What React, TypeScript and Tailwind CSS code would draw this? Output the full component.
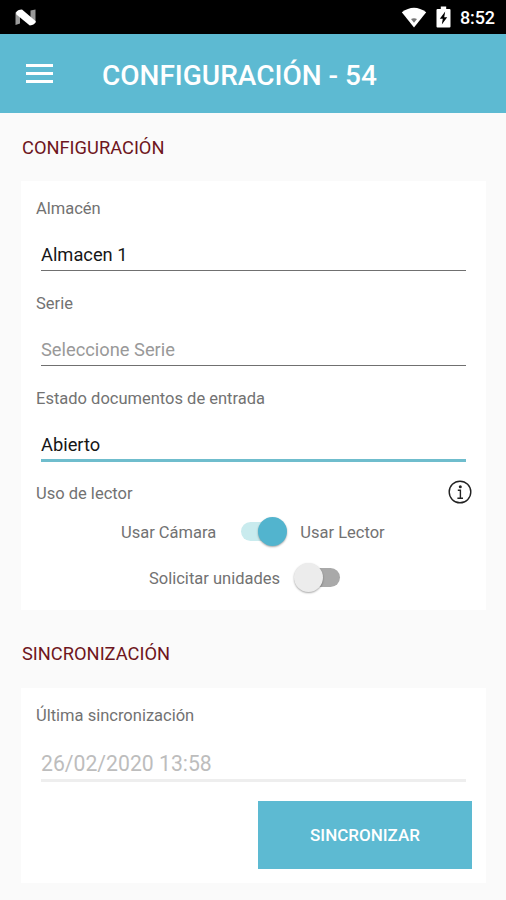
import { useState } from "react";
import clsx from "clsx";

function StatusBar() {
  return (
    <div className="h-[34px] bg-black text-white flex items-center justify-between pl-[15px] pr-[11px]">
      <svg width="21" height="17" viewBox="0 0 21 17">
        <path d="M0.5 3.5 L5 1 V14.5 L0.5 16 Z" fill="#9a9a9a" />
        <path d="M15.5 1.5 L20.5 0.5 V14 H15.5 Z" fill="#9a9a9a" />
        <path d="M1 3.4 Q2.5 0.5 7 0.5 L20.8 12.2 Q20 16 14.8 16.5 L1.4 5.6 Z" fill="#fff" />
      </svg>
      <div className="flex items-center">
        <svg width="26" height="21" viewBox="0 0 26 21" className="mr-[9px]">
          <path d="M0.8 5.3 Q13 -3.9 25.2 5.3 L13 20.5 Z" fill="#fff" />
          <path d="M10 12 Q13 10.4 16 12 L13 15.8 Z" fill="#777" />
        </svg>
        <svg width="15" height="22" viewBox="0 0 15 22" className="mr-[9px]">
          <path d="M1.5 3 H4.8 V0.5 H10.2 V3 H13.5 Q14.5 3 14.5 4 V20.5 Q14.5 21.5 13.5 21.5 H1.5 Q0.5 21.5 0.5 20.5 V4 Q0.5 3 1.5 3 Z" fill="#fff" />
          <path d="M9.2 5.5 L3.8 12.7 H6.8 L5.8 18.5 L11.2 11.2 H8.2 Z" fill="#000" />
        </svg>
        <span className="text-[18px] leading-none font-medium tracking-[-0.1px] pt-px">8:52</span>
      </div>
    </div>
  );
}

function Header() {
  return (
    <header className="h-[79px] bg-[#5dbad2] flex items-center pl-[26px] text-white">
      <button aria-label="Menu" className="flex flex-col gap-[5px] mr-[49px]">
        <span className="w-[27px] h-[3px] bg-white" />
        <span className="w-[27px] h-[3px] bg-white" />
        <span className="w-[27px] h-[3px] bg-white" />
      </button>
      <h1 className="text-[28px] leading-none font-medium whitespace-nowrap pt-[5px]">CONFIGURACIÓN - 54</h1>
    </header>
  );
}

function SectionTitle({ children }: { children: string }) {
  return <h2 className="text-[18.3px] leading-[22px] text-[#6e1520] pl-[22px] whitespace-nowrap">{children}</h2>;
}

function FieldLabel({ children }: { children: string }) {
  return <span className="block h-5 text-[16.5px] leading-[22px] text-[#727272] whitespace-nowrap">{children}</span>;
}

type FieldProps = {
  label: string;
  value?: string;
  placeholder?: string;
  active?: boolean;
};

function Field({ label, value, placeholder, active }: FieldProps) {
  return (
    <div className="h-[95px] pt-[17px] pl-[15px] pr-[20px]">
      <FieldLabel>{label}</FieldLabel>
      <div
        className={clsx(
          "ml-[5px] mt-[26px] text-[18.3px] leading-[22px] whitespace-nowrap",
          active ? "h-[28px] border-b-3 border-[#6fbdcd]" : "h-[27px] border-b border-[#707070]",
          value ? "text-[#161616]" : "text-[#999]"
        )}
      >
        {value ?? placeholder}
      </div>
    </div>
  );
}

function Toggle({ checked, onChange }: { checked: boolean; onChange: (v: boolean) => void }) {
  return (
    <button
      role="switch"
      aria-checked={checked}
      onClick={() => onChange(!checked)}
      className="relative w-[46px] h-[29px] flex items-center"
    >
      <span
        className={clsx(
          "h-[19px] w-[44px] rounded-full",
          checked ? "bg-[#c9ebee]" : "bg-[#a9a9a9] ml-[2px]"
        )}
      />
      <span
        className={clsx(
          "absolute top-0 w-[29px] h-[29px] rounded-full shadow-[0_1px_2px_rgba(0,0,0,0.35)]",
          checked ? "right-0 bg-[#52b4ce]" : "left-0 bg-[#ececec]"
        )}
      />
    </button>
  );
}

export default function App() {
  const [useReader, setUseReader] = useState(true);
  const [askUnits, setAskUnits] = useState(false);

  return (
    <div className="w-full h-[900px] bg-[#fafafa] overflow-hidden font-[Roboto,sans-serif]">
      <StatusBar />
      <Header />

      <main className="pt-[24px]">
        <SectionTitle>CONFIGURACIÓN</SectionTitle>
        <section className="mt-[22px] ml-[21px] mr-[20px] h-[429px] bg-white">
          <Field label="Almacén" value="Almacen 1" />
          <Field label="Serie" placeholder="Seleccione Serie" />
          <Field label="Estado documentos de entrada" value="Abierto" active />

          {/* Reader options */}
          <div className="h-[51px] pt-[14px] pl-[15px] pr-[14px] flex items-start justify-between">
            <div className="pt-[3px]">
              <FieldLabel>Uso de lector</FieldLabel>
            </div>
            <svg width="24" height="24" viewBox="0 0 24 24" fill="none" stroke="#222">
              <circle cx="12" cy="12" r="10.8" strokeWidth="1.4" />
              <circle cx="12.3" cy="6.7" r="1.5" fill="#222" stroke="none" />
              <path d="M9.8 10.2 H12.4 V18 M9.4 18.2 H15" strokeWidth="1.4" />
            </svg>
          </div>
          <div className="h-[29px] pl-[100px] flex items-center">
            <FieldLabel>Usar Cámara</FieldLabel>
            <div className="ml-[25px] mr-[13px]">
              <Toggle checked={useReader} onChange={setUseReader} />
            </div>
            <FieldLabel>Usar Lector</FieldLabel>
          </div>
          <div className="h-[29px] mt-[17px] pl-[128px] flex items-center">
            <FieldLabel>Solicitar unidades</FieldLabel>
            <div className="ml-[14px]">
              <Toggle checked={askUnits} onChange={setAskUnits} />
            </div>
          </div>
        </section>

        <div className="mt-[33px]">
          <SectionTitle>SINCRONIZACIÓN</SectionTitle>
        </div>
        <section className="mt-[23px] ml-[21px] mr-[20px] h-[195px] bg-white pt-[17px] pl-[15px]">
          <FieldLabel>Última sincronización</FieldLabel>
          <div className="ml-[5px] mr-[20px] mt-[25px] h-[32px] border-b-3 border-[#eeeeee] text-[21.2px] leading-[28px] text-[#bdbdbd] whitespace-nowrap">
            26/02/2020 13:58
          </div>
          <button className="block ml-auto mr-[14px] mt-[19px] pt-[2px] w-[214px] h-[68px] bg-[#5dbad2] text-white text-[17px] font-medium">
            SINCRONIZAR
          </button>
        </section>
      </main>
    </div>
  );
}
